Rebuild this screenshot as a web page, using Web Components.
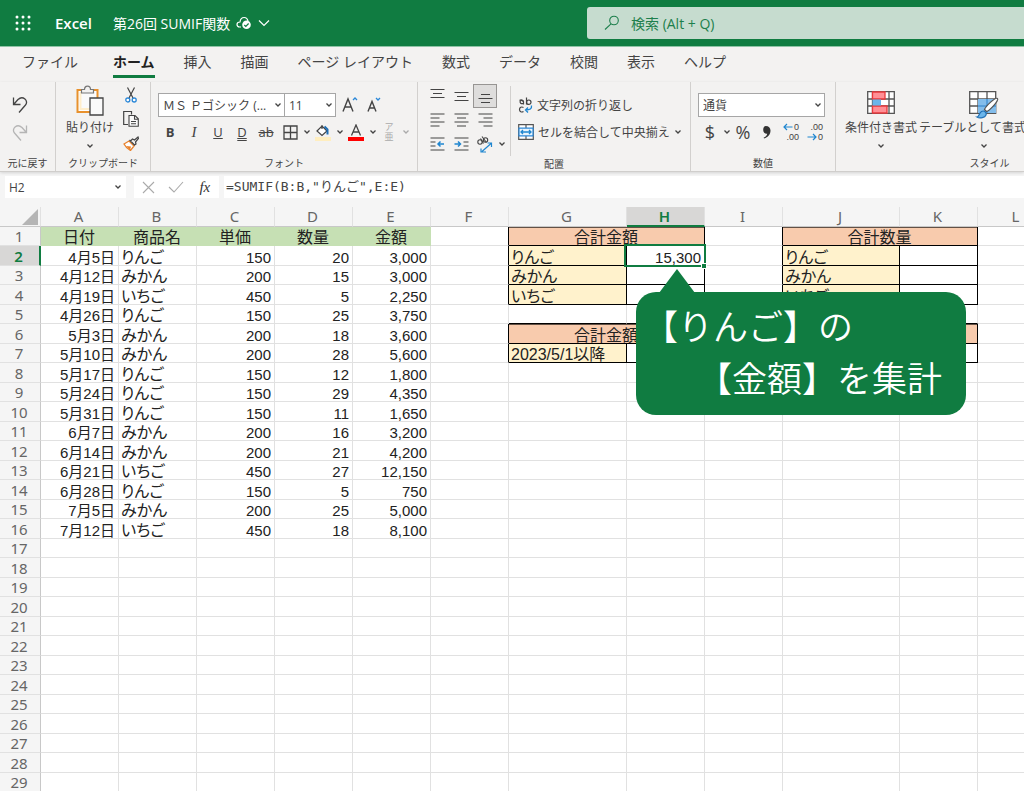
<!DOCTYPE html>
<html lang="ja">
<head>
<meta charset="utf-8">
<title>第26回 SUMIF関数 - Excel</title>
<style>
  html, body { margin: 0; height: 100%; }
  body { overflow: hidden; font-family: "Open Sans", "Noto Sans CJK JP", sans-serif; color: #444; }
</style>
</head>
<body>
<excel-app></excel-app>
<script>
const ICONS = {
  waffle: [16, 16, '<g fill="#fff"><circle cx="2" cy="2" r="1.5"/><circle cx="8" cy="2" r="1.5"/><circle cx="14" cy="2" r="1.5"/><circle cx="2" cy="8" r="1.5"/><circle cx="8" cy="8" r="1.5"/><circle cx="14" cy="8" r="1.5"/><circle cx="2" cy="14" r="1.5"/><circle cx="8" cy="14" r="1.5"/><circle cx="14" cy="14" r="1.5"/></g>'],
  cloud: [16, 14, '<path d="M5 11H3.5C2 11 1 10 1 8.600S2 6 4 6C4.300 3.500 6 1.500 8.200 1.500S11.500 3 12 5" fill="none" stroke="#fff" stroke-width="1.200"/><circle cx="10.500" cy="8.800" r="4.300" fill="#fff"/><path d="M8.300 9l1.500 1.500 2.800-3" fill="none" stroke="#107c41" stroke-width="1.200"/>'],
  chevWhite: [12, 8, '<path d="M1 1.500l5 5 5-5" fill="none" stroke="#fff" stroke-width="1.200"/>'],
  chev: [8, 6, '<path d="M1.500 1.500L4 4l2.500-2.500" fill="none" stroke="#444" stroke-width="1.300"/>'],
  chevOff: [8, 6, '<path d="M1.500 1.500L4 4l2.500-2.500" fill="none" stroke="#aaa" stroke-width="1.300"/>'],
  search: [16, 16, '<circle cx="10" cy="5.500" r="4.300" fill="none" stroke="#1d7f4c" stroke-width="1.100"/><path d="M7 8.800L1 14.500" stroke="#1d7f4c" stroke-width="1.100"/>'],
  undo: [16, 18, '<path d="M1.500 1.500v7h7M2 8L6 3.500C11-1 17 5 13.500 9L7 16.500" fill="none" stroke="#444" stroke-width="1.300"/>'],
  redo: [16, 18, '<path d="M14.500 1.500v7h-7M14 8L10 3.500C5-1-1 5 2.500 9L9 16.500" fill="none" stroke="#b5b5b5" stroke-width="1.300"/>'],
  paste: [28, 31, '<path d="M1.500 5h20v22H1.500z" fill="#fff" stroke="#e8912d" stroke-width="2"/><path d="M3.500 7h16v18h-16z" fill="#fafafa"/><path d="M3.500 7h2v16h8v2h-10z" fill="#ffeecb"/><path d="M5.500 8V4.500h3C8.500 0 14.500 0 14.500 4.500h3V8z" fill="#f3f2f1" stroke="#777" stroke-width="1.200"/><path d="M14 13h13v17H14z" fill="#fafafa" stroke="#444" stroke-width="1.300"/>'],
  cut: [12, 16, '<path d="M2.500.500L8 11M9.500.500L4 11" stroke="#444" stroke-width="1.200"/><circle cx="2.800" cy="13" r="2" fill="#fff" stroke="#2b88d8" stroke-width="1.300"/><circle cx="9.200" cy="13" r="2" fill="#fff" stroke="#2b88d8" stroke-width="1.300"/>'],
  copy: [16, 16, '<path d="M5 13.500H.700v-13h7.800v3" fill="none" stroke="#444" stroke-width="1.200"/><path d="M6 4.500h6l3.300 3.300v7.500H6zM11.500 4.500v3.700h3.800M8 10.500h5M8 12.800h5" fill="#fafafa" stroke="#444" stroke-width="1.100"/>'],
  painter: [16, 15, '<path d="M1 8l5-3 5 5-3.500 4.500C5 13 2.500 11 1 8z" fill="#fff" stroke="#e8822d" stroke-width="1.300"/><path d="M3 10l5 .500-1 3.500z" fill="#e8822d"/><path d="M6.500 4l5.500 5.500M7.500 5l2-2 2 1L15 1l.500 1.500-3 3.500.500 2-1.500 1z" fill="#f3f2f1" stroke="#444" stroke-width="1.200"/>'],
  borders: [15, 15, '<path d="M1 1h13v13H1zM7.500 1v13M1 7.500h13" fill="none" stroke="#444" stroke-width="1.300"/>'],
  fill: [16, 17, '<path d="M2 7l5-5 5 5-5 4.500zM7 5V1" fill="#fff" stroke="#444" stroke-width="1.200"/><path d="M9.500 2.500l3 3v5" fill="none" stroke="#1f6fb5" stroke-width="2"/><path d="M0 13h16v4H0z" fill="#ffeebf"/>'],
  big: [16, 18, '<path d="M1 15.500L6 3l5 12.500M2.800 11h6.500" fill="none" stroke="#444" stroke-width="1.400"/><path d="M11 4l2-2 2 2" fill="none" stroke="#2b88d8" stroke-width="1.300"/>'],
  small: [16, 18, '<path d="M2 15.500L6 5.500l4 10M3.500 12h5" fill="none" stroke="#444" stroke-width="1.400"/><path d="M10 2l2 2 2-2" fill="none" stroke="#2b88d8" stroke-width="1.300"/>'],
  fontColor: [16, 17, '<path d="M3.500 11.500L8 1l4.500 10.500M5 8h6" fill="none" stroke="#444" stroke-width="1.300"/><path d="M0 13h16v4H0z" fill="#f00"/>'],
  top: [15, 16, '<path d="M.500 1.500h14M3 5.500h9M.500 9.500h14" stroke="#444" stroke-width="1.200"/>'],
  middle: [15, 16, '<path d="M.500 4.500h14M3 8.500h9M.500 12.500h14" stroke="#444" stroke-width="1.200"/>'],
  bottom: [15, 16, '<path d="M3 6.500h9M.500 10.500h14M3 14.500h9" stroke="#444" stroke-width="1.200"/>'],
  left: [15, 16, '<path d="M.500 2h14M.500 6h9M.500 10h14M.500 14h9" stroke="#444" stroke-width="1.200"/>'],
  center: [15, 16, '<path d="M.500 2h14M3 6h9M.500 10h14M3 14h9" stroke="#444" stroke-width="1.200"/>'],
  right: [15, 16, '<path d="M.500 2h14M5.500 6h9M.500 10h14M5.500 14h9" stroke="#444" stroke-width="1.200"/>'],
  outdent: [15, 16, '<path d="M.500 2h14M.500 6h5M.500 10h5M.500 14h14" stroke="#444" stroke-width="1.200"/><path d="M14 8H8m2.500-2.500L8 8l2.500 2.500" fill="none" stroke="#1f86d0" stroke-width="1.500"/>'],
  indent: [15, 16, '<path d="M.500 2h14M9.500 6h5M9.500 10h5M.500 14h14" stroke="#444" stroke-width="1.200"/><path d="M.500 8h6M4 5.500L6.500 8 4 10.500" fill="none" stroke="#1f86d0" stroke-width="1.500"/>'],
  orient: [18, 17, '<g fill="none" stroke="#444" stroke-width="1.100"><circle cx="4" cy="6" r="2.200"/><path d="M4.500 2.500l3 5M6 .500l4.500 6"/><circle cx="9.500" cy="4" r="2.200"/></g><path d="M6 15.500l9-8M11.500 7h4v4M5 12.500v3.500h5" fill="none" stroke="#1f86d0" stroke-width="1.200"/>'],
  wrap: [15, 16, '<g fill="none" stroke="#444" stroke-width="1.200"><path d="M1.500 3.500c1.500-1.200 4-.500 4 1V7.500M5.500 5C2-.001 0 8 5.500 6.500M8.500.500v7"/><circle cx="10.800" cy="5.200" r="2.200"/><path d="M5.500 10.500c-2-1.200-4 0-4 2s2 3.200 4 2"/></g><path d="M13.500 8.500c.500 3.500-1.500 4.500-6 4.500m2.500-2.500L7.500 13l2.500 2.500" fill="none" stroke="#1f86d0" stroke-width="1.300"/>'],
  merge: [16, 16, '<path d="M.700.700h14.600v14.600H.700zM8 .700V4M8 12v3.300" fill="#fff" stroke="#555" stroke-width="1.200"/><path d="M1 4.200h14v7.600H1z" fill="#e9f4fc" stroke="#2b88d8" stroke-width="1.200"/><path d="M3 8h10M5 6L3 8l2 2M11 6l2 2-2 2" fill="none" stroke="#1f86d0" stroke-width="1.300"/>'],
  cond: [28, 23, '<path d="M.700.700h26.600v21.600H.700zM5.500.700v21.600M22 .700v21.600M.700 8h26.600M.700 15h26.600" fill="#fff" stroke="#555" stroke-width="1.300"/><path d="M5.500 1h12.500v7H5.500zM5.500 15h14.500v7H5.500z" fill="#ff8f95" stroke="#e8393c" stroke-width="1.300"/><path d="M5.500 8.500h8.500v6H5.500z" fill="#6bb5ea"/>'],
  tableFmt: [30, 28, '<path d="M.700.700h26v21.600H.700zM9 .700v21.600M18 .700v21.600M.700 8h26M.700 15h26" fill="#fff" stroke="#555" stroke-width="1.300"/><path d="M9 8h18v14H9z" fill="#83bdeb"/><path d="M18 8v14M9 15h18" stroke="#2b7fc8"/><path d="M28.500 7.500c2 1.500-8 12.500-11 13l-2-2c1-3 11-13 13-11z" fill="#fff" stroke="#555" stroke-width="1.200"/><path d="M8 26c2 0 2-4 4.500-5.500s5.500 1 4.500 3.500S11 28 8 26z" fill="#6bb5ea" stroke="#1f6fb5" stroke-width="1.200"/>'],
  comma: [10, 14, '<path d="M3.800 1C6.600 1 8.500 2.800 8.500 5.500c0 4-2.500 6.800-6.500 8l-.300-.900c2-.800 3.300-2 3.500-3.900C3 9 1.200 7.400 1.200 4.900 1.200 2.500 2.300 1 3.800 1z" fill="#333"/>'],
  arrowL: [10, 8, '<path d="M9.500 4H1m3-3L1 4l3 3" fill="none" stroke="#1f86d0" stroke-width="1.200"/>'],
  arrowR: [10, 8, '<path d="M.500 4H9M6 1l3 3-3 3" fill="none" stroke="#1f86d0" stroke-width="1.200"/>'],
  cross: [13, 13, '<path d="M1 1l11 11M12 1L1 12" stroke="#aaa" stroke-width="1.100"/>'],
  check: [16, 12, '<path d="M1 6l5 5L15 1" fill="none" stroke="#aaa" stroke-width="1.100"/>']
};

function component(name, html, setup) {
  const tpl = document.createElement('template');
  tpl.innerHTML = html;
  customElements.define(name, class extends HTMLElement {
    connectedCallback() {
      if (this.shadowRoot) return;
      this.attachShadow({ mode: 'open' }).append(tpl.content.cloneNode(true));
      if (setup) setup(this, this.shadowRoot);
    }
  });
}

component('x-icon', '<style>:host{display:inline-flex;flex:none}svg{display:block}</style>', (el, root) => {
  const [w, h, body] = ICONS[el.getAttribute('name')];
  root.innerHTML += `<svg width="${w}" height="${h}" viewBox="0 0 ${w} ${h}" aria-hidden="true">${body}</svg>`;
});

component('title-bar', `
<style>
  :host { display: flex; height: 46px; background: #107c41; color: #fff; border-bottom: 1px solid #8fc3a6; }
  .left { display: flex; align-items: center; box-sizing: border-box; flex: none; width: 587px; padding-left: 15px; font-size: 14px; }
  button { background: none; border: 0; padding: 0; display: flex; color: inherit; font: inherit; align-items: center; }
  b { font-size: 15px; font-weight: 600; margin: 0 21px 0 24px; }
  .doc { gap: 6px; }
  label { flex: 1; display: flex; align-items: center; gap: 11px; margin: 7px 0; padding-left: 17px; background: #c6dccf; border-radius: 3px 0 0 3px; overflow: hidden; }
  input { flex: 1; min-width: 0; border: 0; padding: 0; background: none; outline: 0; font: inherit; font-size: 14px; color: #1d7f4c; }
  input::placeholder { color: #1d7f4c; opacity: 1; }
</style>
<div class="left">
  <button aria-label="アプリ起動ツール"><x-icon name="waffle"></x-icon></button>
  <b>Excel</b>
  <button class="doc">第26回 SUMIF関数 <x-icon name="cloud"></x-icon><x-icon name="chevWhite"></x-icon></button>
</div>
<label><x-icon name="search"></x-icon><input type="text" aria-label="検索" placeholder="検索 (Alt + Q)"></label>`);

component('ribbon-tabs', `
<style>
  :host { display: block; background: #f3f2f1; }
  nav { display: flex; gap: 29px; padding: 0 22px; height: 35px; font-size: 14px; line-height: 30px; white-space: nowrap; }
  a { color: #444; text-decoration: none; }
  a:first-child { margin-right: 6px; }
  .on { color: #222; font-weight: 700; box-sizing: border-box; height: 31px; border-bottom: 3px solid #107c41; }
</style>
<nav><a href="#file">ファイル</a><a class="on" href="#home">ホーム</a><a href="#insert">挿入</a><a href="#draw">描画</a><a href="#layout">ページ レイアウト</a><a href="#formulas">数式</a><a href="#data">データ</a><a href="#review">校閲</a><a href="#view">表示</a><a href="#help">ヘルプ</a></nav>`);

component('ribbon-group', `
<style>
  :host { display: flex; flex-direction: column; flex: none; box-sizing: border-box; border-right: 1px solid #d2d0ce; }
  .body { flex: 1; }
  .name { text-align: center; font-size: 10px; line-height: 16px; height: 16px; white-space: nowrap; }
</style>
<div class="body"><slot></slot></div><div class="name"></div>`, (el, root) => {
  root.querySelector('.name').textContent = el.getAttribute('label');
});

component('tool-select', `
<style>
  :host { display: flex; box-sizing: border-box; position: relative; height: 24px; border: 1px solid #a6a6a6; background: #fff; align-items: center; }
  select { appearance: none; border: 0; background: none; flex: 1; min-width: 0; padding: 0 0 0 4px; font: inherit; font-size: 12px; color: #444; outline: 0; }
  x-icon { position: absolute; right: 2px; pointer-events: none; }
</style>
<select><option></option></select><x-icon name="chev"></x-icon>`, (el, root) => {
  root.querySelector('option').textContent = el.getAttribute('value');
  root.querySelector('select').setAttribute('aria-label', el.getAttribute('label'));
});

component('ribbon-bar', `
<style>
  :host { display: flex; height: 89px; overflow: hidden; background: #f3f2f1; border-bottom: 1px solid #d0cecc; font-size: 12px; box-shadow: 0 1px 3px #0002; position: relative; }
  button { background: none; border: 0; padding: 0; font: inherit; color: inherit; display: flex; align-items: center; justify-content: center; width: 24px; height: 24px; flex: none; white-space: nowrap; }
  .row, .stack { display: flex; }
  .stack { flex-direction: column; }
  .undo { width: 56px; } .clip { width: 95px; } .font { width: 267px; } .align { width: 273px; } .num { width: 145px; } .styles { width: 308px; }
  .undo .stack { padding: 11px 0 0 8px; gap: 4px; }
  .clip .row { padding: 1px 0 0 3px; }
  .clip .stack { margin-left: -2px; }
  .paste { width: 62px; height: 72px; flex-direction: column; justify-content: flex-start; padding-top: 2px; }
  .paste span, .style span { line-height: 18px; height: 18px; margin-bottom: 6px; }
  .paste span { margin-top: 3px; }
  .pad { padding: 11px 8px 0 7px; gap: 3px; }
  .c { width: 9px; }
  .fmt { font-size: 13px; }
  .fmt i { font-family: "Liberation Serif", serif; font-size: 15px; }
  .dbl { text-decoration: underline double; }
  .sel { background: #dedddc; outline: 1px solid #979593; outline-offset: -1px; }
  .ph { color: #aaa; flex-direction: column; font: 9px/10px "Liberation Sans", "Noto Sans CJK JP", sans-serif; }
  .ph u { text-decoration: none; }
  .grid { display: grid; grid-template-columns: repeat(3, 24px) 10px; padding-left: 7px; margin-top: 2px; }
  .wide { width: auto; gap: 4px; }
  .text { padding: 7px 0 0 7px; margin: 4px 0 0 3px; height: 70px; box-sizing: border-box; border-left: 1px solid #d2d0ce; gap: 3px; align-items: flex-start; }
  .big { font-size: 18px; }
  .dec { flex-direction: column; font: 9px/10px "Liberation Sans", sans-serif; align-items: flex-end; padding-right: 4px; }
  .dec span { display: flex; align-items: center; gap: 1px; }
  .styles .row { padding: 9px 0 0 9px; gap: 2px; }
  .style { width: auto; height: 62px; flex-direction: column; justify-content: flex-start; }
  .style x-icon:first-child { height: 28px; }
</style>
<ribbon-group class="undo" label="元に戻す"><div class="stack">
  <button aria-label="元に戻す"><x-icon name="undo"></x-icon></button>
  <button aria-label="やり直し"><x-icon name="redo"></x-icon></button></div></ribbon-group>
<ribbon-group class="clip" label="クリップボード"><div class="row">
  <button class="paste"><x-icon name="paste"></x-icon><span>貼り付け</span><x-icon name="chev"></x-icon></button>
  <div class="stack"><button aria-label="切り取り"><x-icon name="cut"></x-icon></button><button aria-label="コピー"><x-icon name="copy"></x-icon></button><button aria-label="書式のコピー"><x-icon name="painter"></x-icon></button></div></div></ribbon-group>
<ribbon-group class="font" label="フォント"><div class="stack pad">
  <div class="row"><tool-select style="width:127px" label="フォント" value="ＭＳ Ｐゴシック (..."></tool-select><tool-select style="width:52px;margin-left:-1px" label="サイズ" value="11"></tool-select>
    <button aria-label="拡大" style="margin-left:2px"><x-icon name="big"></x-icon></button><button aria-label="縮小"><x-icon name="small"></x-icon></button></div>
  <div class="row fmt"><button><b>B</b></button><button><i>I</i></button><button><u>U</u></button><button><span class="dbl">D</span></button><button><s>ab</s></button>
    <button aria-label="罫線"><x-icon name="borders"></x-icon></button><button class="c" aria-label="罫線の種類"><x-icon name="chev"></x-icon></button>
    <button aria-label="塗りつぶし"><x-icon name="fill"></x-icon></button><button class="c" aria-label="塗りつぶしの色"><x-icon name="chev"></x-icon></button>
    <button aria-label="文字色"><x-icon name="fontColor"></x-icon></button><button class="c" aria-label="文字色の選択"><x-icon name="chev"></x-icon></button>
    <button class="ph"><span>ア</span><u>亜</u></button><button class="c" aria-label="ふりがな"><x-icon name="chevOff"></x-icon></button></div></div></ribbon-group>
<ribbon-group class="align" label="配置"><div class="row"><div class="grid">
  <button aria-label="上揃え"><x-icon name="top"></x-icon></button><button aria-label="上下中央揃え"><x-icon name="middle"></x-icon></button><button class="sel" aria-label="下揃え"><x-icon name="bottom"></x-icon></button><span></span>
  <button aria-label="左揃え"><x-icon name="left"></x-icon></button><button aria-label="中央揃え"><x-icon name="center"></x-icon></button><button aria-label="右揃え"><x-icon name="right"></x-icon></button><span></span>
  <button aria-label="インデントを減らす"><x-icon name="outdent"></x-icon></button><button aria-label="インデントを増やす"><x-icon name="indent"></x-icon></button><button aria-label="方向"><x-icon name="orient"></x-icon></button><button class="c" aria-label="方向の選択"><x-icon name="chev"></x-icon></button></div>
  <div class="stack text"><button class="wide"><x-icon name="wrap"></x-icon>文字列の折り返し</button><button class="wide"><x-icon name="merge"></x-icon>セルを結合して中央揃え<x-icon name="chev"></x-icon></button></div></div></ribbon-group>
<ribbon-group class="num" label="数値"><div class="stack pad"><tool-select style="width:127px" label="表示形式" value="通貨"></tool-select>
  <div class="row"><button class="big">$</button><button class="c" aria-label="通貨の選択"><x-icon name="chev"></x-icon></button><button class="big">%</button><button aria-label="桁区切り"><x-icon name="comma"></x-icon></button>
  <button class="dec"><span><x-icon name="arrowL"></x-icon>0</span><span>.00</span></button><button class="dec"><span>.00</span><span><x-icon name="arrowR"></x-icon>0</span></button></div></div></ribbon-group>
<ribbon-group class="styles" label="スタイル"><div class="row">
  <button class="style"><x-icon name="cond"></x-icon><span>条件付き書式</span><x-icon name="chev"></x-icon></button>
  <button class="style"><x-icon name="tableFmt"></x-icon><span>テーブルとして書式設定</span><x-icon name="chev"></x-icon></button></div></ribbon-group>`);

component('formula-bar', `
<style>
  :host { display: flex; gap: 8px; height: 22px; padding: 4px 0 9px 5px; background: #f5f5f5; }
  .box { background: #fff; display: flex; align-items: center; box-sizing: border-box; }
  .name { width: 121px; padding: 0 4px; }
  .ops { width: 85px; }
  .ops button { flex: 1; display: flex; justify-content: center; align-items: center; background: none; border: 0; padding: 0; }
  .fx { flex: 1; margin-left: -3px; padding: 0 0 3px 2px; }
  input { width: 100%; min-width: 0; border: 0; padding: 0; outline: 0; background: none; color: #444; font: inherit; font-size: 12px; }
  .fx input { font-family: "DejaVu Sans Mono", "Noto Sans CJK JP", monospace; font-size: 13px; }
  i { font: italic 15px "Liberation Serif", serif; color: #333; }
</style>
<div class="box name"><input type="text" aria-label="名前ボックス" value="H2"><x-icon name="chev"></x-icon></div>
<div class="box ops"><button aria-label="キャンセル"><x-icon name="cross"></x-icon></button><button aria-label="入力"><x-icon name="check"></x-icon></button><button><i>fx</i></button></div>
<div class="box fx"><input type="text" aria-label="数式バー" value='=SUMIF(B:B,"りんご",E:E)'></div>`);

component('callout-note', `
<style>
  :host { display: block; box-sizing: border-box; width: 330px; padding: 7px 7px 12px; border-radius: 20px; background: #107c41; color: #fff; font-size: 35px; line-height: 52px; font-weight: 350; white-space: nowrap; font-family: "Noto Sans CJK JP", sans-serif; }
  svg { position: absolute; left: 23px; bottom: 100%; margin-bottom: -1px; }
</style>
<svg width="36" height="24" viewBox="0 0 36 24"><path d="M18 0l18 24H0z" fill="#107c41"/></svg><slot></slot>`);

component('sheet-grid', `
<style>
  :host { display: block; position: relative; overflow: hidden; background: #fff; color: #222; }
  table { border-collapse: separate; border-spacing: 0; table-layout: fixed; width: 1056px; font-family: "Liberation Sans", "Noto Sans CJK JP", sans-serif; font-size: 15px; }
  col { width: 78px; } col.h { width: 41px; } col.g { width: 118px; } col.j { width: 117px; }
  th, td { padding: 0 3px 0 2px; border: 0 solid #e1e1e1; border-width: 0 1px 1px 0; box-sizing: border-box; line-height: 18px; white-space: nowrap; text-align: left; position: relative; }
  tr { height: 20px; } tbody tr:nth-child(odd) { height: 19px; }
  td div { height: 18px; line-height: 22px; }
  th { font: 15px/18px "Noto Sans", sans-serif; color: #666; background: #f5f5f5; text-align: center; padding: 0; }
  thead th { border-bottom-color: #c8c8c8; vertical-align: top; padding-right: 2px; }
  tbody th { border-right-color: #c8c8c8; padding-right: 2px; }
  th.on { background: #d8d7d6; color: #107c41; font-weight: 600; }
  thead th.on { border-bottom: 2px solid #107c41; }
  tbody th.on { border-right: 2px solid #107c41; }
  .corner svg { display: block; margin: 2px 0 0 auto; }
  .n { text-align: right; }
  .t { font-size: 16px; font-feature-settings: "palt"; }
  .head { background: #c6e0b4; border-color: #c6e0b4; text-align: center; font-size: 16px; }
  .bl { border-right-color: #000; } .bb { border-bottom-color: #000; }
  .o { background: #f8cbad; text-align: center; font-size: 16px; box-shadow: inset 0 1px #0009; }
  .y { background: #fff2cc; }
  .cur::after { content: ""; position: absolute; inset: -2px -2px -2px -3px; border: 2px solid #107c41; z-index: 1; }
  .cur::before { content: ""; position: absolute; right: -3px; bottom: -4px; width: 4px; height: 4px; border: 1px solid #fff; background: #107c41; z-index: 2; }
  callout-note { position: absolute; left: 636px; top: 85px; z-index: 3; }
  .second { padding-left: 54px; }
</style>
<table aria-label="シート"><colgroup></colgroup><thead></thead><tbody></tbody></table>
<callout-note><div>【りんご】の</div><div class="second">【金額】を集計</div></callout-note>`, (el, root) => {
  const cols = 'ABCDEFGHIJKL'.split('');
  const data = [['4月5日','りんご','150','20','3,000'],['4月12日','みかん','200','15','3,000'],['4月19日','いちご','450','5','2,250'],['4月26日','りんご','150','25','3,750'],['5月3日','みかん','200','18','3,600'],['5月10日','みかん','200','28','5,600'],['5月17日','りんご','150','12','1,800'],['5月24日','りんご','150','29','4,350'],['5月31日','りんご','150','11','1,650'],['6月7日','みかん','200','16','3,200'],['6月14日','みかん','200','21','4,200'],['6月21日','いちご','450','27','12,150'],['6月28日','りんご','150','5','750'],['7月5日','みかん','200','25','5,000'],['7月12日','いちご','450','18','8,100']];
  const cells = {};
  const put = (ref, cls, text = '', span = 1) => cells[ref] = { cls, text, span };
  ['日付', '商品名', '単価', '数量', '金額'].forEach((t, i) => put(cols[i] + 1, 'head', t));
  data.forEach((r, y) => r.forEach((t, i) => put(cols[i] + (y + 2), i === 1 ? 't' : 'n', t)));
  const block = (before, a, b, row, title, names) => {
    put(a + row, 'o bl bb', title, 2);
    put(before + row, 'bl');
    names.forEach((n, i) => {
      put(before + (row + 1 + i), 'bl');
      put(a + (row + 1 + i), 't y bl bb', n);
      put(b + (row + 1 + i), 'n bl bb');
    });
  };
  const fruit = ['りんご', 'みかん', 'いちご'];
  block('F', 'G', 'H', 1, '合計金額', fruit);
  block('I', 'J', 'K', 1, '合計数量', fruit);
  block('F', 'G', 'H', 6, '合計金額', ['2023/5/1以降']);
  block('I', 'J', 'K', 6, '', ['']);
  'GHJK'.split('').forEach(c => put(c + 5, 'bb'));
  put('H2', 'n bl bb cur', '15,300');

  root.querySelector('colgroup').innerHTML = '<col class="h">' + cols.map(c => `<col class="${c === 'G' ? 'g' : c === 'J' ? 'j' : ''}">`).join('');
  root.querySelector('thead').innerHTML = '<tr><th class="corner" aria-label="すべて選択"><svg width="16" height="16" viewBox="0 0 16 16"><path d="M16 0v16H0z" fill="#b5b5b5"/></svg></th>' +
    cols.map(c => `<th scope="col"${c === 'H' ? ' class="on"' : ''}>${c}</th>`).join('') + '</tr>';
  let html = '';
  for (let r = 1; r <= 29; r++) {
    html += `<tr><th scope="row"${r === 2 ? ' class="on"' : ''}>${r}</th>`;
    for (let i = 0; i < cols.length;) {
      const c = cells[cols[i] + r] || { cls: '', text: '', span: 1 };
      html += `<td class="${c.cls}" colspan="${c.span}">${c.text ? `<div>${c.text}</div>` : ''}</td>`;
      i += c.span;
    }
    html += '</tr>';
  }
  root.querySelector('tbody').innerHTML = html;
});

component('excel-app', `
<style>
  :host { display: flex; flex-direction: column; height: 100vh; overflow: hidden; background: #f3f2f1; }
  title-bar, ribbon-tabs, ribbon-bar, formula-bar { flex: none; }
  sheet-grid { flex: 1; min-height: 0; }
</style>
<title-bar></title-bar><ribbon-tabs></ribbon-tabs><ribbon-bar></ribbon-bar><formula-bar></formula-bar><sheet-grid></sheet-grid>`);
</script>
</body>
</html>
